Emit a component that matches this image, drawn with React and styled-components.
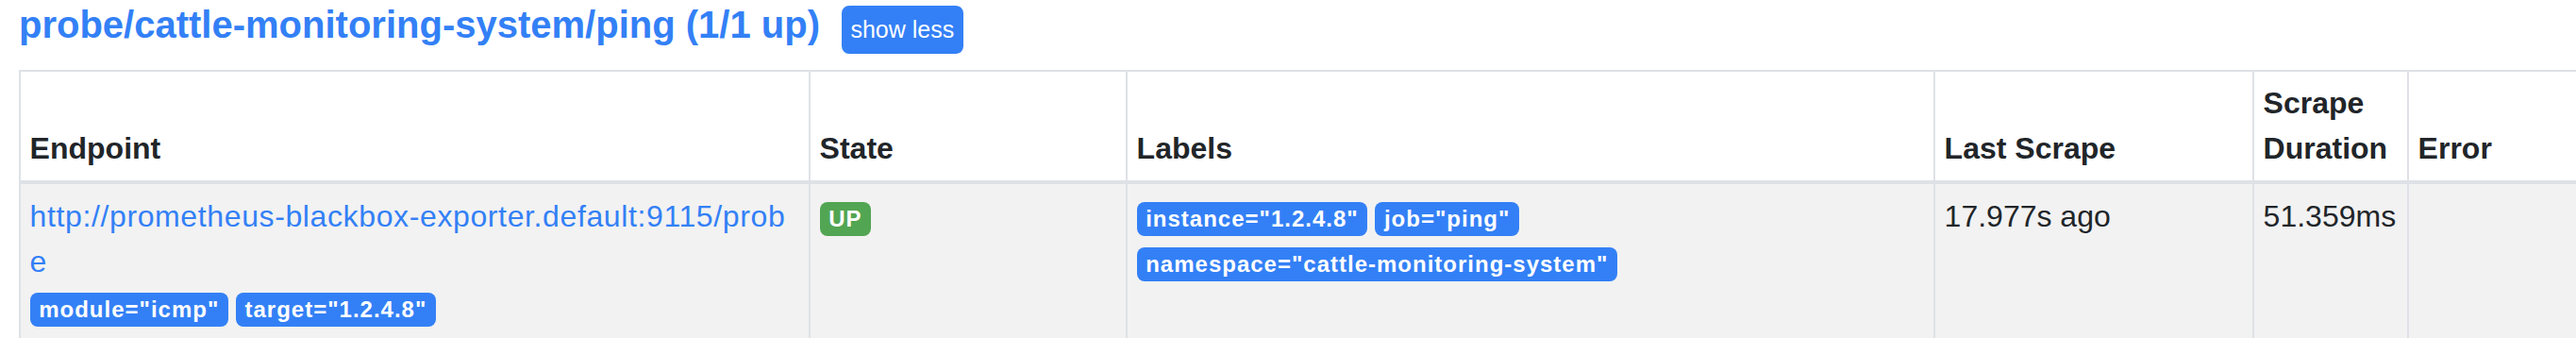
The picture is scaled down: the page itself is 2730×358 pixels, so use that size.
import React from 'react'
import styled, { createGlobalStyle } from 'styled-components'

const GlobalStyle = createGlobalStyle`
  body {
    margin: 0;
    background: #fff;
    color: #212529;
    font-family: "Liberation Sans", Arial, sans-serif;
    overflow: hidden;
  }
`

const columns = [
  { key: 'endpoint', title: 'Endpoint', width: 837 },
  { key: 'state', title: 'State', width: 336 },
  { key: 'labels', title: 'Labels', width: 856 },
  { key: 'lastScrape', title: 'Last Scrape', width: 338 },
  { key: 'duration', title: 'Scrape Duration', width: 164 },
  { key: 'error', title: 'Error', width: 300 },
]

const target = {
  endpoint: 'http://prometheus-blackbox-exporter.default:9115/probe',
  params: ['module="icmp"', 'target="1.2.4.8"'],
  health: 'UP',
  labels: ['instance="1.2.4.8"', 'job="ping"', 'namespace="cattle-monitoring-system"'],
  lastScrape: '17.977s ago',
  duration: '51.359ms',
  error: '',
}

const App = () => {
  return (
    <>
      <GlobalStyle />
      <Page>
        <PoolHeader>
          <PoolTitle href="#probe/cattle-monitoring-system/ping">
            probe/cattle-monitoring-system/ping (1/1 up)
          </PoolTitle>
          <ToggleButton type="button">show less</ToggleButton>
        </PoolHeader>
        <TargetTable>
          <colgroup>
            {columns.map((col) => (
              <col key={col.key} style={{ width: col.width }} />
            ))}
          </colgroup>
          <thead>
            <tr>
              {columns.map((col) => (
                <HeadCell key={col.key}>{col.title}</HeadCell>
              ))}
            </tr>
          </thead>
          <tbody>
            <StripedRow>
              <Cell>
                <EndpointLink href={target.endpoint}>{target.endpoint}</EndpointLink>
                <BadgeLine>
                  {target.params.map((p) => (
                    <Badge key={p}>{p}</Badge>
                  ))}
                </BadgeLine>
              </Cell>
              <Cell>
                <Badge $color="#52a552">{target.health}</Badge>
              </Cell>
              <Cell>
                {target.labels.map((l) => (
                  <Badge key={l}>{l}</Badge>
                ))}
              </Cell>
              <Cell>{target.lastScrape}</Cell>
              <Cell>{target.duration}</Cell>
              <Cell>{target.error}</Cell>
            </StripedRow>
          </tbody>
        </TargetTable>
      </Page>
    </>
  )
}

const Page = styled.div`
  padding: 2px 0 0 20px;
`

const PoolHeader = styled.div`
  display: flex;
  align-items: baseline;
  gap: 23px;
`

const PoolTitle = styled.a`
  font-size: 40px;
  line-height: 48px;
  font-weight: 700;
  color: #3380f6;
  text-decoration: none;
`

const ToggleButton = styled.button`
  font-family: inherit;
  font-size: 25px;
  line-height: 37.5px;
  padding: 4.75px 7.5px;
  border: 2px solid #3380f6;
  border-radius: 8px;
  background: #3380f6;
  color: #fff;
`

const TargetTable = styled.table`
  margin-top: 16.5px;
  border-collapse: collapse;
  table-layout: fixed;
  width: 2831px;
  font-size: 32px;
  line-height: 48px;
`

const HeadCell = styled.th`
  padding: 9.6px;
  border: 2px solid #dee2e6;
  border-bottom-width: 4px;
  text-align: left;
  vertical-align: bottom;
  font-weight: 700;
`

const StripedRow = styled.tr`
  background: #f2f2f2;
`

const Cell = styled.td`
  padding: 9.6px;
  border: 2px solid #dee2e6;
  vertical-align: top;
`

const EndpointLink = styled.a`
  color: #3380f6;
  text-decoration: none;
  word-break: break-all;
  letter-spacing: 0.62px;
`

const BadgeLine = styled.div``

const Badge = styled.span`
  display: inline-block;
  margin-right: 8px;
  padding: 6px 9.6px;
  border-radius: 8px;
  background: ${(p) => p.$color || '#3380f6'};
  color: #fff;
  font-size: 24px;
  font-weight: 700;
  line-height: 1;
  letter-spacing: 1px;
  white-space: nowrap;
`

export default App
